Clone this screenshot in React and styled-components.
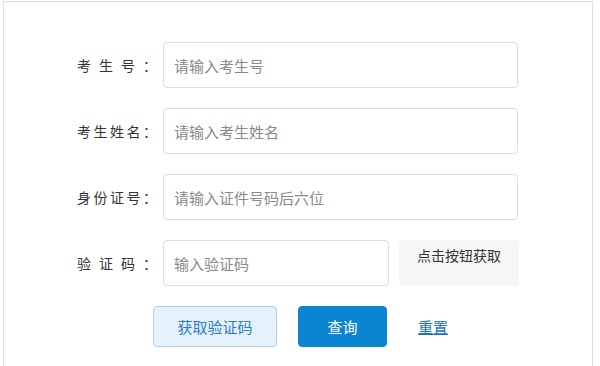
import React from "react";
import styled, { createGlobalStyle } from "styled-components";

const GlobalStyle = createGlobalStyle`
  html, body {
    margin: 0;
    padding: 0;
    background: #fff;
    font-family: "Noto Sans CJK SC", "Noto Sans", sans-serif;
  }
`;

const Panel = styled.div`
  margin: 1px 0 0 3px;
  width: 590px;
  height: 380px;
  box-sizing: border-box;
  border: 1px solid #dedede;
  border-bottom: none;
  padding: 40px 0 0 73px;
`;

const Row = styled.div`
  display: flex;
  align-items: center;
  height: 46px;
  margin-bottom: 20px;
`;

const Label = styled.div`
  width: 80px;
  margin-right: 6px;
  display: flex;
  justify-content: space-between;
  font-size: 14px;
  color: #333;
  line-height: 20px;
`;

const Input = styled.input`
  box-sizing: border-box;
  width: ${(p) => p.$w || 355}px;
  height: 46px;
  border: 1px solid #dcdcdc;
  border-radius: 4px;
  padding: 0 10px;
  font-family: inherit;
  font-size: 15px;
  color: #333;
  outline: none;
  &::placeholder {
    color: #8a8a8a;
  }
`;

const CodeButton = styled.button`
  box-sizing: border-box;
  width: 120px;
  height: 46px;
  margin-left: 10px;
  border: none;
  border-radius: 4px;
  background: #f6f6f6;
  color: #333;
  font-family: inherit;
  font-size: 14px;
  line-height: 20px;
  padding: 5px 0 0;
  display: flex;
  justify-content: center;
  align-items: flex-start;
`;

const Actions = styled.div`
  display: flex;
  align-items: center;
  padding-left: 76px;
`;

const Button = styled.button`
  box-sizing: border-box;
  height: 41px;
  width: ${(p) => p.$w}px;
  margin-right: ${(p) => p.$mr}px;
  border-radius: 4px;
  font-family: inherit;
  font-size: 15px;
  cursor: pointer;
  border: 1px solid ${(p) => (p.$primary ? "#0b85d0" : "#a9d4f1")};
  background: ${(p) => (p.$primary ? "#0b85d0" : "#e5f1fb")};
  color: ${(p) => (p.$primary ? "#fff" : "#2a7dcc")};
`;

const ResetLink = styled.a`
  font-size: 15px;
  color: #1c74c0;
  text-decoration: underline;
  cursor: pointer;
`;

const fields = [
  { label: ["考", "生", "号", "："], placeholder: "请输入考生号" },
  { label: ["考", "生", "姓", "名", "："], placeholder: "请输入考生姓名" },
  { label: ["身", "份", "证", "号", "："], placeholder: "请输入证件号码后六位" },
];

export default function App() {
  return (
    <>
      <GlobalStyle />
      <Panel>
        {fields.map((f) => (
          <Row key={f.placeholder}>
            <Label>
              {f.label.map((c, i) => (
                <span key={i}>{c}</span>
              ))}
            </Label>
            <Input placeholder={f.placeholder} />
          </Row>
        ))}
        <Row>
          <Label>
            <span>验</span>
            <span>证</span>
            <span>码</span>
            <span>：</span>
          </Label>
          <Input $w={226} placeholder="输入验证码" />
          <CodeButton>点击按钮获取</CodeButton>
        </Row>
        <Actions>
          <Button $w={124} $mr={21}>获取验证码</Button>
          <Button $w={89} $mr={31} $primary>查询</Button>
          <ResetLink>重置</ResetLink>
        </Actions>
      </Panel>
    </>
  );
}
